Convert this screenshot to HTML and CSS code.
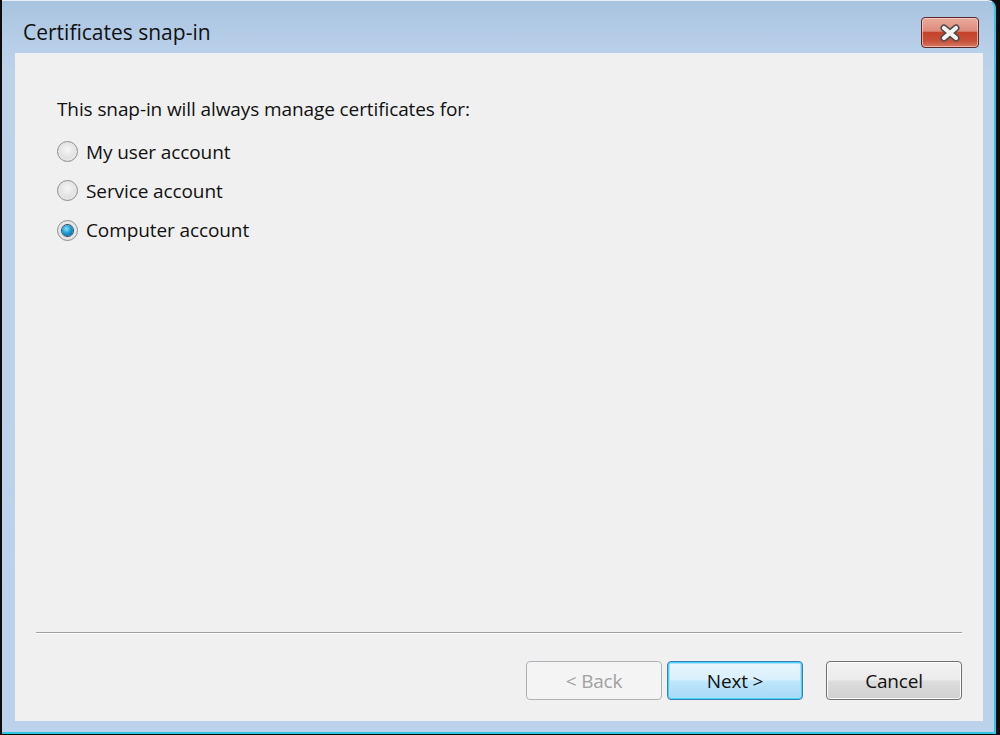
FILE: index.html
```html
<!DOCTYPE html>
<html>
<head>
<meta charset="utf-8">
<link rel="stylesheet" href="styles.css">
</head>
<body>
<div class="window">
  <div class="titlebar">
    <div class="title">Certificates snap-in</div>
    <button class="close" aria-label="Close">
      <svg width="26" height="18" viewBox="0 0 26 18">
        <path d="M7 4 L19 14 M19 4 L7 14" stroke="#4a4a4a" stroke-width="7" stroke-linecap="round"/>
        <path d="M7 4 L19 14 M19 4 L7 14" stroke="#f4f4f4" stroke-width="4.2" stroke-linecap="round"/>
      </svg>
    </button>
  </div>
  <div class="client">
    <div class="content">
      <p class="intro">This snap-in will always manage certificates for:</p>
      <div class="options">
        <label class="option"><span class="radio"></span><span>My user account</span></label>
        <label class="option"><span class="radio"></span><span>Service account</span></label>
        <label class="option"><span class="radio checked"></span><span>Computer account</span></label>
      </div>
    </div>
    <div class="separator"></div>
    <div class="buttons">
      <button class="btn disabled">&lt; Back</button>
      <button class="btn default">Next &gt;</button>
      <button class="btn cancel">Cancel</button>
    </div>
  </div>
</div>
</body>
</html>
```
FILE: styles.css
```css
html, body {
  margin: 0;
  padding: 0;
}
body {
  width: 1000px;
  height: 735px;
  background: #0c0c0c;
  overflow: hidden;
  font-family: "Open Sans", "Noto Sans", sans-serif;
}
.window {
  width: 992px;
  height: 731px;
  margin-left: 2px;
  background: linear-gradient(180deg, #a8c3df 0px, #b6cee8 40px, #bcd3ea 70px, #bbd2ea 100%);
  border-right: 2px solid #2fc6e4;
  border-bottom: 2px solid #2fc6e4;
  border-top: 1px solid #e8eef6;
  border-top-right-radius: 8px;
  display: flex;
  flex-direction: column;
  box-sizing: content-box;
}
.titlebar {
  height: 52px;
  display: flex;
  align-items: flex-start;
  padding: 0 15px 0 21px;
}
.title {
  margin-top: 17px;
  font-size: 21px;
  line-height: 28px;
  color: #111;
}
.close {
  margin-left: auto;
  margin-top: 16px;
  width: 58px;
  height: 31px;
  border: 1px solid #5a2a2a;
  border-radius: 4px;
  background: linear-gradient(180deg, #eaaa9d 0%, #dd8b7b 45%, #c4432a 50%, #c8513a 80%, #d67a62 100%);
  box-shadow: inset 0 0 0 1px rgba(255,220,210,0.6);
  display: flex;
  align-items: center;
  justify-content: center;
  padding: 0;
}
.client {
  margin: 0 11px 11px 13px;
  flex: 1;
  background: #f0f0f0;
  display: flex;
  flex-direction: column;
}
.content {
  flex: 1;
  padding: 0 0 0 42px;
}
.intro {
  margin: 44px 0 0 0;
  font-size: 19px;
  line-height: 24px;
  color: #111;
  letter-spacing: -0.1px;
}
.options {
  margin-top: 11px;
  display: flex;
  flex-direction: column;
}
.option {
  display: flex;
  align-items: center;
  height: 39px;
  font-size: 19px;
  color: #111;
  letter-spacing: -0.1px;
  gap: 8px;
}
.option:nth-child(3) { height: 40px; }
.radio {
  width: 19px;
  height: 19px;
  border-radius: 50%;
  border: 1px solid #8f8f8f;
  background: radial-gradient(circle at 50% 40%, #f6f6f6 0%, #e2e2e2 55%, #cfcfcf 100%);
  box-shadow: inset 0 0 0 2px #e6e6e6;
  position: relative;
  flex: none;
}
.radio.checked::after {
  content: "";
  position: absolute;
  left: 4px;
  top: 4px;
  width: 11px;
  height: 11px;
  border-radius: 50%;
  background: radial-gradient(circle at 40% 35%, #8fe0f7 0%, #1d9bd6 45%, #0a4f86 100%);
  box-shadow: 0 0 0 1px #264a6a;
}
.separator {
  margin: 0 21px;
  height: 1px;
  background: #a0a0a0;
  border-bottom: 1px solid #ffffff;
}
.buttons {
  display: flex;
  justify-content: flex-end;
  padding: 27px 21px 21px 0;
}
.btn {
  width: 136px;
  height: 39px;
  border-radius: 4px;
  font-family: "Open Sans", "Noto Sans", sans-serif;
  font-size: 19px;
  letter-spacing: -0.2px;
  color: #111;
  border: 1px solid #707070;
  background: linear-gradient(180deg, #f2f2f2 0%, #ebebeb 48%, #dddddd 52%, #cfcfcf 100%);
  box-shadow: inset 0 0 0 1px #fbfbfb;
  padding: 0;
}
.btn.disabled {
  color: #a0a0a0;
  border-color: #adb2b5;
  background: #f4f4f4;
  box-shadow: none;
}
.btn.default {
  margin-left: 5px;
  border-color: #3c7fb1;
  background: linear-gradient(180deg, #eaf6fd 0%, #d9f0fc 48%, #bee6fd 52%, #a7d9f5 100%);
  box-shadow: inset 0 0 0 1px #48d0fa, inset 0 0 0 2px #a9e3fb;
}
.btn.cancel {
  margin-left: 23px;
}
```
